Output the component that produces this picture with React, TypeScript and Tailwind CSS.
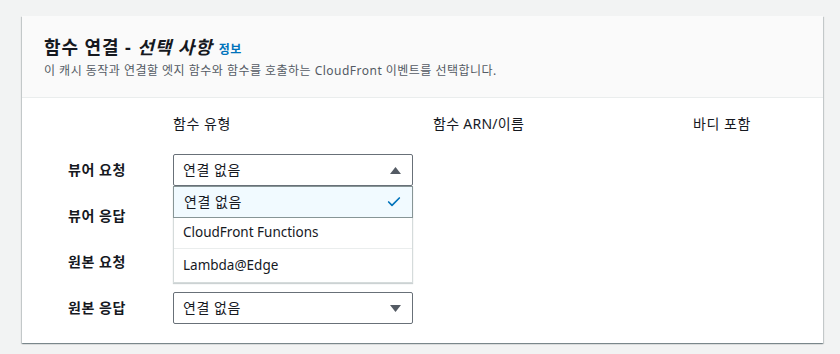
import { Check } from "lucide-react";

const font = { fontFamily: '"Noto Sans", "Noto Sans CJK KR", sans-serif' };

const rows = ["뷰어 요청", "뷰어 응답", "원본 요청", "원본 응답"];

function Caret({ up }: { up?: boolean }) {
  return (
    <svg width="11" height="7" viewBox="0 0 11 7" className="shrink-0">
      {up ? <polygon points="5.5,0 11,7 0,7" fill="#545b64" /> : <polygon points="0,0 11,0 5.5,7" fill="#545b64" />}
    </svg>
  );
}

function Select({ open }: { open?: boolean }) {
  return (
    <div className="relative h-8 w-[240px]">
      <div className="flex h-8 items-center justify-between rounded-[2px] border border-[#687078] bg-white pl-[9px] pr-[11px] text-sm text-[#16191f]">
        <span className="tracking-[0.04em]">연결 없음</span>
        <Caret up={open} />
      </div>
      {open && (
        <div className="absolute left-0 top-8 z-10 w-[240px] border border-[#d5dbdb] bg-white text-sm text-[#16191f] shadow-[0_1px_1px_rgba(0,28,36,0.2)]">
          <div className="-mx-px -mt-px flex h-[32px] items-center justify-between border border-[#879596] bg-[#f1faff] pl-[10px] pr-[10px]">
            <span className="tracking-[0.04em]">연결 없음</span>
            <Check size={16} strokeWidth={2.5} className="text-[#0073bb]" />
          </div>
          <div className="flex h-[31px] items-center border-b border-[#eaeded] pl-[9px] text-[13.5px]">CloudFront Functions</div>
          <div className="flex h-[33px] items-center pl-[9px] text-[13.5px]">Lambda@Edge</div>
        </div>
      )}
    </div>
  );
}

export default function App() {
  return (
    <div className="min-h-screen bg-[#f2f3f3] pl-[22px] pr-[17px] pt-[16px]" style={font}>
      <div className="bg-white shadow-[0_1px_1px_0_rgba(0,28,36,0.3),1px_1px_1px_0_rgba(0,28,36,0.15),-1px_1px_1px_0_rgba(0,28,36,0.15)]">
        <div className="h-[82px] border-b border-[#eaeded] bg-[#fafafa] px-[22px] pt-[18px]">
          <div className="flex items-baseline gap-[6px]">
            <h2 className="text-[18px] font-bold leading-[26px] tracking-[0.05em] text-[#16191f]">
              함수 연결 - <i>선택 사항</i>
            </h2>
            <span className="text-[12px] font-bold tracking-[0.04em] text-[#0073bb]">정보</span>
          </div>
          <p className="mt-[3px] text-[12px] leading-[16px] tracking-[0.04em] text-[#545b64]">
            이 캐시 동작과 연결할 엣지 함수와 함수를 호출하는 CloudFront 이벤트를 선택합니다.
          </p>
        </div>
        <div className="grid grid-cols-[85px_240px_240px_1fr] gap-x-5 pb-[19px] pl-[46px] pt-[16px] text-sm text-[#16191f]">
          <div />
          <div className="h-5 leading-5 tracking-[0.04em]">함수 유형</div>
          <div className="h-5 leading-5 tracking-[0.02em]">함수 ARN/이름</div>
          <div className="h-5 leading-5 tracking-[0.04em]">바디 포함</div>
          {rows.map((r, i) => (
            <div key={r} className="contents">
              <div className={`flex h-8 items-center font-bold tracking-[0.04em] ${i === 0 ? "mt-5" : "mt-[14px]"}`}>{r}</div>
              <div className={i === 0 ? "mt-5" : "mt-[14px]"}>
                {(i === 0 || i === 3) && <Select open={i === 0} />}
              </div>
              <div />
              <div />
            </div>
          ))}
        </div>
      </div>
    </div>
  );
}
